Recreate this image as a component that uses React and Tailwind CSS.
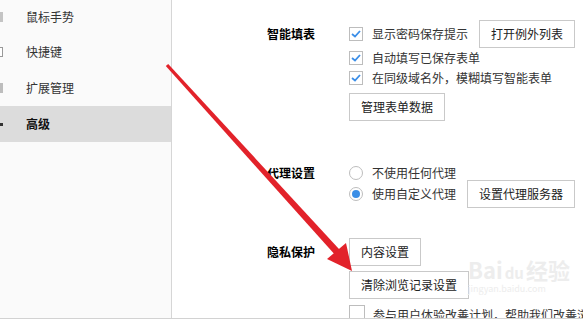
const font = { fontFamily: '"Noto Sans CJK SC", "Noto Sans", sans-serif' };

const Check = ({ checked }) => (
  <span className="flex h-[14px] w-[14px] shrink-0 items-center justify-center border border-[#bdbdbd] bg-white">
    {checked && (
      <svg width="10" height="8" viewBox="0 0 10 8">
        <polyline points="1,4 4,6.5 9,1" fill="none" stroke="#3b8ee8" strokeWidth="1.8" />
      </svg>
    )}
  </span>
);

const Radio = ({ on }) => (
  <span className="flex h-[14px] w-[14px] shrink-0 items-center justify-center rounded-full border border-[#bdbdbd] bg-white">
    {on && <span className="h-[8px] w-[8px] rounded-full bg-[#3a8ee6]" />}
  </span>
);

const Btn = ({ children, className = "" }) => (
  <button className={"h-[28px] border border-[#c9c9c9] bg-white px-[11px] text-[12px] text-[#222] " + className}>
    {children}
  </button>
);

const sideItems = [
  { name: "鼠标手势", h: "h-[34px]", icon: "bg-[#c4c4c4]" },
  { name: "快捷键", h: "h-[36px]", icon: "border border-[#999] bg-white" },
  { name: "扩展管理", h: "h-[36px]", icon: "bg-[#bdbdbd]" },
  { name: "高级", h: "h-[36px]", icon: "bg-[#333]", active: true },
];

export default function App() {
  return (
    <div style={font} className="relative flex h-[319px] w-[583px] overflow-hidden border-b border-[#d2d2d2] bg-white text-[12px] text-[#333]">
      <aside className="flex w-[172px] shrink-0 flex-col border-r border-[#d6d6d6] bg-[#fafafa]">
        {sideItems.map((it) => (
          <div
            key={it.name}
            className={"flex items-center " + it.h + (it.active ? " bg-[#dcdcdc] font-bold text-[#111]" : "")}
          >
            <span className={"-ml-[10px] shrink-0 " + (it.active ? "h-[3px] w-[13px] " : "h-[10px] w-[13px] ") + it.icon} />
            <span className="ml-[23px]">{it.name}</span>
          </div>
        ))}
      </aside>

      <main className="flex-1 pl-[95px] pt-[20px]">
        <section className="flex">
          <div className="flex h-[28px] w-[82px] items-center font-bold text-black">智能填表</div>
          <div className="flex flex-col">
            <div className="flex h-[28px] items-center">
              <Check checked />
              <span className="ml-[9px]">显示密码保存提示</span>
              <Btn className="ml-[11px]">打开例外列表</Btn>
            </div>
            <div className="flex h-[19px] items-center">
              <Check checked />
              <span className="ml-[9px]">自动填写已保存表单</span>
            </div>
            <div className="flex h-[21px] items-center">
              <Check checked />
              <span className="ml-[9px]">在同级域名外，模糊填写智能表单</span>
            </div>
            <div className="mt-[5px]">
              <Btn>管理表单数据</Btn>
            </div>
          </div>
        </section>

        <section className="mt-[45px] flex">
          <div className="flex h-[14px] w-[82px] items-center font-bold text-black">代理设置</div>
          <div className="flex flex-col">
            <div className="flex h-[14px] items-center">
              <Radio />
              <span className="ml-[9px]">不使用任何代理</span>
            </div>
            <div className="flex h-[28px] items-center">
              <Radio on />
              <span className="ml-[9px]">使用自定义代理</span>
              <Btn className="ml-[11px]">设置代理服务器</Btn>
            </div>
          </div>
        </section>

        <section className="mt-[30px] flex">
          <div className="flex h-[28px] w-[82px] items-center font-bold text-black">隐私保护</div>
          <div className="flex flex-col items-start">
            <Btn>内容设置</Btn>
            <Btn className="mt-[5px]">清除浏览记录设置</Btn>
            <div className="mt-[6px] flex h-[16px] items-start whitespace-nowrap">
              <span className="h-[16px] w-[16px] shrink-0 border border-[#bdbdbd] bg-white" />
              <span className="ml-[8px] mt-[4px] leading-none">参与用户体验改善计划，帮助我们改善浏览器</span>
            </div>
          </div>
        </section>
      </main>

      <div className="pointer-events-none absolute left-[468px] top-[258px] flex flex-col items-start whitespace-nowrap leading-none text-[#ededed]">
        <span className="text-[22px] font-bold">Bai<span className="mx-[2px] text-[15px]">du</span>经验</span>
        <span className="mt-[4px] text-[9px]">jingyan.baidu.com</span>
      </div>

      <svg className="pointer-events-none absolute left-0 top-0" width="583" height="319" viewBox="0 0 583 319">
        <polygon points="168.2,64 165.8,66 335.4,255.3 340.6,250.7" fill="#e2222a" />
        <polygon points="327,259 346,243 352,271" fill="#e2222a" />
      </svg>
    </div>
  );
}
